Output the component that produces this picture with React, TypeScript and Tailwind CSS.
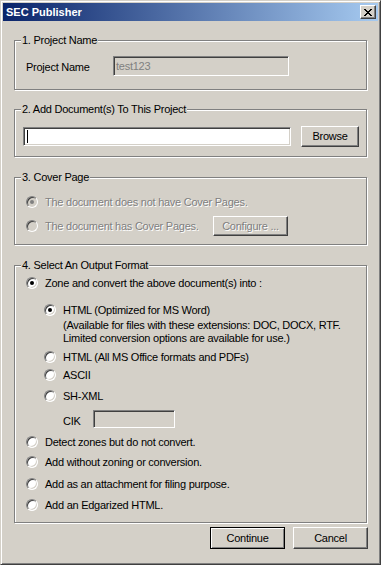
import React from "react";

const sunken =
  "border border-t-[#808080] border-l-[#808080] border-b-white border-r-white shadow-[inset_1px_1px_0_#404040,inset_-1px_-1px_0_#d4d0c8]";
const raised =
  "border border-t-white border-l-white border-b-[#404040] border-r-[#404040] shadow-[inset_-1px_-1px_0_#808080]";
const disabledText = "text-[#808080] [text-shadow:1px_1px_0_#fff]";

function Radio({ checked, disabled }: { checked?: boolean; disabled?: boolean }) {
  return (
    <span
      className={`flex items-center justify-center w-[12px] h-[12px] shrink-0 rounded-full border border-t-[#808080] border-l-[#808080] border-b-white border-r-white shadow-[inset_1px_1px_0_#404040,inset_-1px_-1px_0_#d4d0c8] ${
        disabled ? "bg-[#d4d0c8]" : "bg-white"
      }`}
    >
      {checked && (
        <span className={`w-[4px] h-[4px] rounded-full ${disabled ? "bg-[#808080]" : "bg-black"}`} />
      )}
    </span>
  );
}

function Group({
  title,
  className,
  children,
}: {
  title: string;
  className: string;
  children: React.ReactNode;
}) {
  return (
    <div className={`relative border border-[#808080] shadow-[inset_1px_1px_0_#fff,1px_1px_0_#fff] ${className}`}>
      <span className="absolute left-[6px] top-[-7px] bg-[#d4d0c8] px-[1px] leading-[13px]">{title}</span>
      {children}
    </div>
  );
}

function Option({
  label,
  checked,
  className,
}: {
  label: string;
  checked?: boolean;
  className: string;
}) {
  return (
    <div className={`flex items-center h-[16px] ${className}`}>
      <Radio checked={checked} />
      <span className="ml-[7px] leading-[13px] whitespace-nowrap">{label}</span>
    </div>
  );
}

export default function App() {
  return (
    <div className="w-[381px] h-[565px] bg-[#d4d0c8] border border-t-[#d4d0c8] border-l-[#d4d0c8] border-b-[#404040] border-r-[#404040] shadow-[inset_1px_1px_0_#fff,inset_-1px_-1px_0_#808080] p-[2px] font-['Liberation_Sans',Arial,sans-serif] text-[11px] tracking-[-0.25px] text-black">
      {/* Title bar */}
      <div className="h-[18px] flex items-center justify-between bg-[linear-gradient(to_right,#0a246a,#a6caf0)] pl-[3px] pr-[2px]">
        <span className="text-white font-bold text-[11px] leading-[13px] tracking-normal">SEC Publisher</span>
        <div className={`w-[16px] h-[14px] bg-[#d4d0c8] flex items-center justify-center ${raised}`}>
          <svg width="8" height="7" viewBox="0 0 8 7" shapeRendering="crispEdges">
            <path
              d="M0 0h2v1h1v1h2V1h1V0h2v1H7v1H6v1H5v1h1v1h1v1h1v1H6V6H5V5H3v1H2v1H0V6h1V5h1V4h1V3H2V2H1V1H0z"
              fill="#000"
            />
          </svg>
        </div>
      </div>

      <div className="px-[11px]">
        {/* 1. Project Name */}
        <Group title="1. Project Name" className="mt-[19px] h-[50px] pt-[15px] pl-[11px]">
          <div className="flex items-center">
            <span className="w-[87px] leading-[13px] mt-[2px]">Project Name</span>
            <div className={`w-[176px] h-[20px] bg-[#d4d0c8] flex items-center pl-[2px] text-[#808080] ${sunken}`}>
              test123
            </div>
          </div>
        </Group>

        {/* 2. Add Documents */}
        <Group title="2. Add Document(s) To This Project" className="mt-[19px] h-[48px] pt-[16px] pl-[8px]">
          <div className="flex items-center">
            <div className={`w-[268px] h-[19px] bg-white flex items-center pl-[3px] ${sunken}`}>
              <span className="w-[1px] h-[13px] bg-black" />
            </div>
            <button className={`ml-[10px] w-[58px] h-[21px] bg-[#d4d0c8] flex items-center justify-center leading-[13px] ${raised}`}>
              Browse
            </button>
          </div>
        </Group>

        {/* 3. Cover Page */}
        <Group title="3. Cover Page" className="mt-[20px] h-[68px] pt-[16px] pl-[11px]">
          <div className="flex items-center h-[16px]">
            <Radio checked disabled />
            <span className={`ml-[7px] leading-[13px] ${disabledText}`}>The document does not have Cover Pages.</span>
          </div>
          <div className="flex items-center h-[20px] mt-[6px]">
            <Radio disabled />
            <span className={`ml-[7px] w-[168px] leading-[13px] ${disabledText}`}>The document has Cover Pages.</span>
            <div className={`w-[75px] h-[20px] bg-[#d4d0c8] flex items-center justify-center leading-[13px] ${raised} ${disabledText}`}>
              Configure ...
            </div>
          </div>
        </Group>

        {/* 4. Select An Output Format */}
        <Group title="4. Select An Output Format" className="mt-[20px] h-[258px] pt-[9px] pl-[11px]">
          <Option label="Zone and convert the above document(s) into :" checked className="" />
          <div className="ml-[18px]">
            <Option label="HTML (Optimized for MS Word)" checked className="mt-[11px]" />
            <div className="ml-[19px] mt-[1px] leading-[13px] whitespace-nowrap">
              <div>(Available for files with these extensions: DOC, DOCX, RTF.</div>
              <div>Limited conversion options are available for use.)</div>
            </div>
            <Option label="HTML (All MS Office formats and PDFs)" className="mt-[4px]" />
            <Option label="ASCII" className="mt-[2px]" />
            <Option label="SH-XML" className="mt-[5px]" />
            <div className="flex items-center h-[18px] mt-[6px] ml-[19px]">
              <span className="w-[30px] leading-[13px] mt-[4px]">CIK</span>
              <div className={`w-[82px] h-[18px] bg-[#d4d0c8] ${sunken}`} />
            </div>
          </div>
          <Option label="Detect zones but do not convert." className="mt-[6px]" />
          <Option label="Add without zoning or conversion." className="mt-[4px]" />
          <Option label="Add as an attachment for filing purpose." className="mt-[6px]" />
          <Option label="Add an Edgarized HTML." className="mt-[5px]" />
        </Group>

        {/* Buttons */}
        <div className="flex justify-end gap-[8px] mt-[4px] -mr-px">
          <button className="w-[75px] h-[22px] bg-[#d4d0c8] border border-black shadow-[inset_1px_1px_0_#fff,inset_-1px_-1px_0_#808080] flex items-center justify-center leading-[13px]">
            Continue
          </button>
          <button className={`w-[75px] h-[22px] bg-[#d4d0c8] flex items-center justify-center leading-[13px] ${raised}`}>
            Cancel
          </button>
        </div>
      </div>
    </div>
  );
}
